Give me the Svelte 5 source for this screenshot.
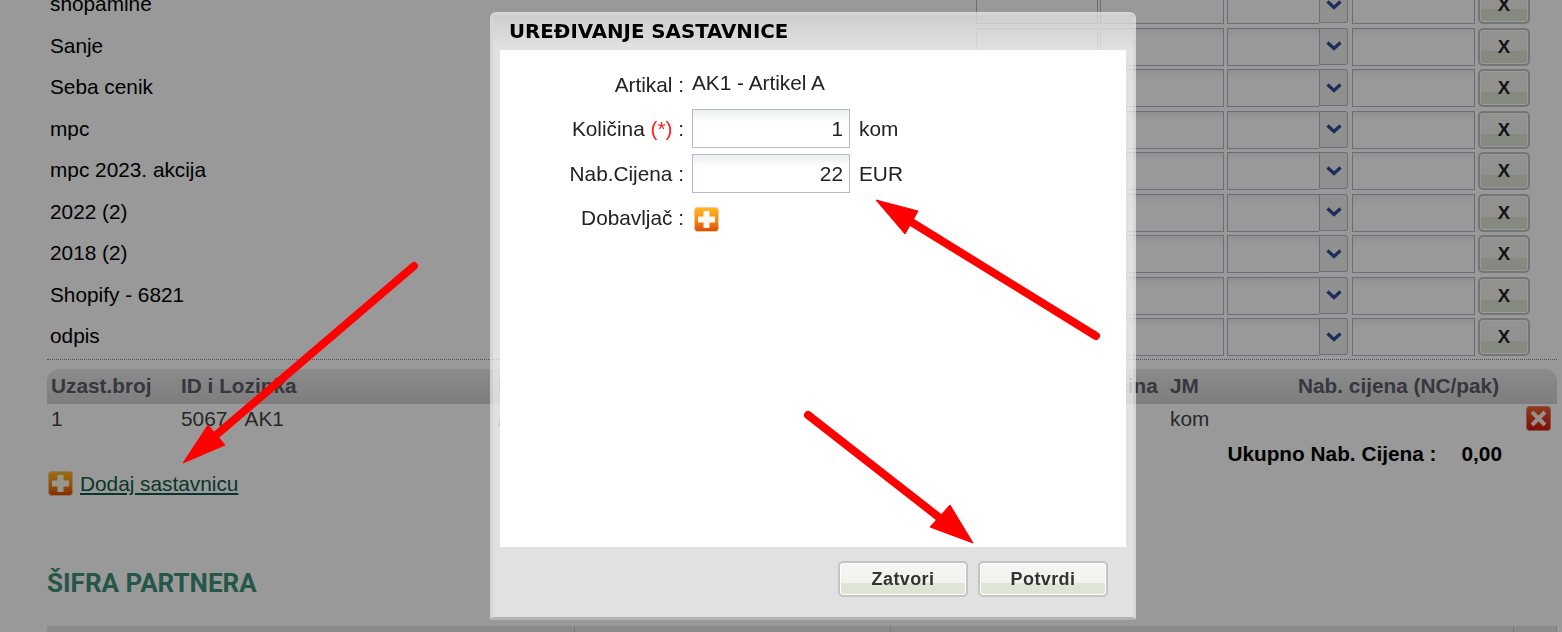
<script>
  const rows = ['shopamine', 'Sanje', 'Seba cenik', 'mpc', 'mpc 2023. akcija', '2022 (2)', '2018 (2)', 'Shopify - 6821', 'odpis']
</script>

{#snippet plus()}
  <svg class="icon" viewBox="0 0 25 25" aria-hidden="true">
    <defs>
      <linearGradient id="plus-fill" x1="0" y1="0" x2="0" y2="1">
        <stop offset="0" stop-color="#ffb820" />
        <stop offset="0.55" stop-color="#f58a10" />
        <stop offset="1" stop-color="#d94a04" />
      </linearGradient>
    </defs>
    <rect x="0.5" y="0.5" width="24" height="24" rx="3" fill="url(#plus-fill)" stroke="#f3c9a0" />
    <path d="M9.500 4h6v5.500H21v6h-5.500V21h-6v-5.500H4v-6h5.500z" fill="#fff" opacity="0.95" />
  </svg>
{/snippet}

<div class="page">
  <section class="price-rows">
    {#each rows as name}
      <div class="price-row">
        <span class="price-name">{name}</span>
        <input class="field field-a" />
        <input class="field field-b" />
        <div class="select">
          <span class="select-value"></span>
          <span class="select-arrow">
            <svg viewBox="0 0 16 10" width="16" height="10" aria-hidden="true">
              <path d="M1.500 1.500 8 7.500l6.500-6" fill="none" stroke="#2f4b9a" stroke-width="3.200" />
            </svg>
          </span>
        </div>
        <input class="field field-c" />
        <button class="btn btn-x">X</button>
      </div>
    {/each}
  </section>

  <table class="parts">
    <thead>
      <tr>
        <th class="c-num">Uzast.broj</th>
        <th class="c-id">ID i Lozinka</th>
        <th class="c-name">Naziv</th>
        <th class="c-qty">Količina</th>
        <th class="c-unit">JM</th>
        <th class="c-price">Nab. cijena (NC/pak)</th>
        <th class="c-del"></th>
      </tr>
    </thead>
    <tbody>
      <tr>
        <td>1</td>
        <td>5067 - AK1</td>
        <td>Artikel A</td>
        <td></td>
        <td>kom</td>
        <td></td>
        <td class="c-del">
          <svg class="icon" viewBox="0 0 25 25" aria-hidden="true">
            <defs>
              <linearGradient id="del-fill" x1="0" y1="0" x2="0" y2="1">
                <stop offset="0" stop-color="#f2622c" />
                <stop offset="1" stop-color="#d4160e" />
              </linearGradient>
            </defs>
            <rect x="0.5" y="0.5" width="24" height="24" rx="3" fill="url(#del-fill)" stroke="#e88a70" />
            <path d="M6 6l13 13M19 6L6 19" stroke="#fff" stroke-width="4" opacity="0.92" />
          </svg>
        </td>
      </tr>
    </tbody>
  </table>

  <div class="total">
    <b class="total-label">Ukupno Nab. Cijena :</b>
    <b class="total-value">0,00</b>
  </div>

  <a class="add-link" href="#add">
    {@render plus()}
    <span>Dodaj sastavnicu</span>
  </a>

  <h2 class="partner-title">ŠIFRA PARTNERA</h2>
  <div class="partner-head">
    <span></span><span></span><span></span><span></span>
  </div>
</div>

<div class="overlay"></div>

<div class="modal">
  <h3 class="modal-title">UREĐIVANJE SASTAVNICE</h3>
  <div class="modal-body">
    <div class="form-row row-article">
      <span class="form-label">Artikal :</span>
      <span class="form-value">AK1 - Artikel A</span>
    </div>
    <div class="form-row row-qty">
      <span class="form-label">Količina <em>(*)</em> :</span>
      <input class="form-input" value="1" />
      <span class="form-unit">kom</span>
    </div>
    <div class="form-row row-price">
      <span class="form-label">Nab.Cijena :</span>
      <input class="form-input" value="22" />
      <span class="form-unit">EUR</span>
    </div>
    <div class="form-row row-supplier">
      <span class="form-label">Dobavljač :</span>
      {@render plus()}
    </div>
  </div>
  <div class="modal-foot">
    <button class="btn btn-foot">Zatvori</button>
    <button class="btn btn-foot">Potvrdi</button>
  </div>
</div>

<!-- annotation arrows drawn on top of the screenshot -->
<svg class="arrows" viewBox="0 0 1562 632" aria-hidden="true">
  <g fill="#ff0000" stroke="#ff0000">
    <path d="M414 266 L215 436" stroke-width="8" stroke-linecap="round" fill="none" />
    <path d="M183 463 L208 425 L225 445 Z" stroke-width="1" />
    <path d="M1096 336 L908 220" stroke-width="8" stroke-linecap="round" fill="none" />
    <path d="M876 200 L918 211 L905 234 Z" stroke-width="1" />
    <path d="M808 415 L945 522" stroke-width="8" stroke-linecap="round" fill="none" />
    <path d="M973 543 L930 527 L950 505 Z" stroke-width="1" />
  </g>
</svg>

<style>
  :global(body) {
    background: #fff;
    overflow: hidden;
    font-family: "Liberation Sans", Arial, sans-serif;
    font-size: 20.8px;
    color: #000;
  }

  .page {
    height: 632px;
    overflow: hidden;
    padding-left: 47px;
    padding-right: 5px;
  }

  /* -- Price list rows -- */
  .price-rows {
    margin-top: -14px;
    display: flex;
    flex-direction: column;
    gap: 3.5px;
    padding-bottom: 3px;
    border-bottom: 1px dotted #888;
  }

  .price-row {
    display: flex;
    align-items: stretch;
    height: 38px;
    padding-right: 27px;
  }

  .price-name {
    flex: 1;
    padding-left: 3px;
    line-height: 36px;
  }

  .field {
    box-sizing: border-box;
    height: 38px;
    border: 1px solid #b4b4cf;
    background: linear-gradient(#eef1ef, #fff 8px);
    padding: 0;
  }

  .field-a {
    width: 122px;
    margin-right: 2px;
  }

  .field-b {
    width: 124px;
    margin-right: 3px;
  }

  .field-c {
    width: 123px;
    margin-right: 3px;
  }

  .select {
    display: flex;
    width: 121px;
    margin-right: 4px;
  }

  .select-value {
    flex: 1;
    border: 1px solid #b4b4cf;
    border-right: none;
    background: linear-gradient(#eef1ef, #fff 8px);
  }

  .select-arrow {
    width: 29px;
    height: 37px;
    box-sizing: border-box;
    display: flex;
    align-items: center;
    justify-content: center;
    background: #f0f0f0;
    border: 1px solid #b4b4cf;
    border-right: 1px solid #9fd0a8;
    border-radius: 0 3px 3px 0;
  }

  .btn {
    box-sizing: border-box;
    font-family: inherit;
    font-weight: 700;
    color: #333;
    border: 2px solid #c4c4c4;
    border-radius: 5px;
    box-shadow: inset 0 0 0 1px #fff;
    background: linear-gradient(#f5f5f3 0, #f1f3ee 62%, #dfe5d4 62%, #dfe5d4 100%);
    padding: 0;
  }

  .btn-x {
    width: 52px;
    height: 38px;
    font-size: 18.5px;
    color: #222;
  }

  /* -- Parts table -- */
  .parts {
    width: 1510px;
    margin-top: 9px;
    border-collapse: collapse;
    table-layout: fixed;
    color: #444;
  }

  .parts th {
    height: 33px;
    padding: 0 0 2px 4px;
    text-align: left;
    font-weight: 700;
    white-space: nowrap;
    color: #5c5c68;
    background: linear-gradient(#e8e8e8, #d2d2d4);
  }

  .parts th:first-child {
    border-top-left-radius: 12px;
  }

  .parts th:last-child {
    border-top-right-radius: 12px;
  }

  .parts td {
    height: 30px;
    padding: 0 0 0 4px;
  }

  .c-num { width: 126px; }
  .c-id { width: 313px; }
  .c-name { width: 575px; }
  .c-qty { width: 89px; }
  .c-unit { width: 124px; }
  .c-price { width: 222px; }

  .parts td.c-del {
    padding: 0 6px 0 0;
  }

  .icon {
    width: 25px;
    height: 25px;
    display: block;
    flex-shrink: 0;
  }

  .c-del .icon {
    margin-left: auto;
    margin-top: -2px;
  }

  .total {
    display: flex;
    justify-content: flex-end;
    gap: 25px;
    margin-top: 8px;
    padding-right: 55px;
    line-height: 24px;
  }

  .add-link {
    display: flex;
    align-items: center;
    gap: 7px;
    margin-top: 5px;
    padding-left: 1px;
    color: #0c5c47;
  }

  .partner-title {
    margin: 72px 0 0;
    font-family: Roboto, sans-serif;
    font-size: 26px;
    line-height: 30px;
    font-weight: 700;
    color: #3f9079;
  }

  .partner-head {
    display: flex;
    height: 30px;
    margin-top: 28px;
    background: #e8e8e8;
  }

  .partner-head span {
    box-sizing: border-box;
    width: 528px;
    border-right: 1px solid #c8c8c8;
  }

  .partner-head span:nth-child(2) {
    width: 316px;
  }

  .partner-head span:nth-child(3) {
    width: 623px;
  }

  .partner-head span:nth-child(4) {
    width: 43px;
  }

  .overlay {
    position: fixed;
    inset: 0;
    background: rgba(0, 0, 0, 0.4);
  }

  /* -- Modal -- */
  .modal {
    position: fixed;
    left: 490px;
    top: 12px;
    width: 646px;
    height: 608px;
    box-sizing: border-box;
    display: flex;
    flex-direction: column;
    padding: 0 7px;
    border: 3px solid rgba(255, 255, 255, 0.6);
    border-bottom-color: rgba(255, 255, 255, 0.25);
    border-radius: 6px 6px 3px 3px;
    background: rgba(255, 255, 255, 0.7);
    background-clip: padding-box;
  }

  .modal-title {
    height: 35px;
    margin: 0 -7px;
    padding: 0 16px;
    font-family: "DejaVu Sans", sans-serif;
    font-size: 19.8px;
    line-height: 33px;
    font-weight: 700;
    white-space: nowrap;
    color: #000;
    background: linear-gradient(rgba(150, 150, 150, 0.25), rgba(255, 255, 255, 0));
  }

  .modal-body {
    flex: 0 0 497px;
    box-sizing: border-box;
    background: #fff;
    padding-top: 20px;
  }

  .form-row {
    display: flex;
    align-items: center;
    color: #222;
  }

  .form-label {
    width: 184px;
    text-align: right;
    margin-right: 8px;
    flex-shrink: 0;
  }

  .form-label em {
    font-style: normal;
    color: #ff2020;
  }

  .row-article {
    height: 26px;
    padding-top: 2px;
    margin-bottom: 11px;
  }

  .row-article .form-value {
    position: relative;
    top: -2px;
  }

  .row-qty,
  .row-price {
    height: 39px;
    margin-bottom: 6px;
  }

  .row-supplier {
    margin-top: 14px;
  }

  .row-supplier .form-label {
    position: relative;
    top: -2px;
  }

  .row-supplier .icon {
    margin-left: 2px;
  }

  .form-input {
    box-sizing: border-box;
    width: 158px;
    height: 39px;
    border: 1px solid #b5b8cf;
    background: linear-gradient(#eaeeec, #fff 12px);
    font: inherit;
    color: #222;
    text-align: right;
    padding: 0 6px 0 0;
  }

  .form-unit {
    margin-left: 9px;
  }

  .modal-foot {
    display: flex;
    justify-content: flex-end;
    gap: 10px;
    padding: 14px 18px 0 0;
  }

  .btn-foot {
    width: 130px;
    height: 36px;
    font-size: 18px;
    letter-spacing: 0.4px;
  }

  .arrows {
    position: fixed;
    inset: 0;
    width: 1562px;
    height: 632px;
    pointer-events: none;
  }
</style>
